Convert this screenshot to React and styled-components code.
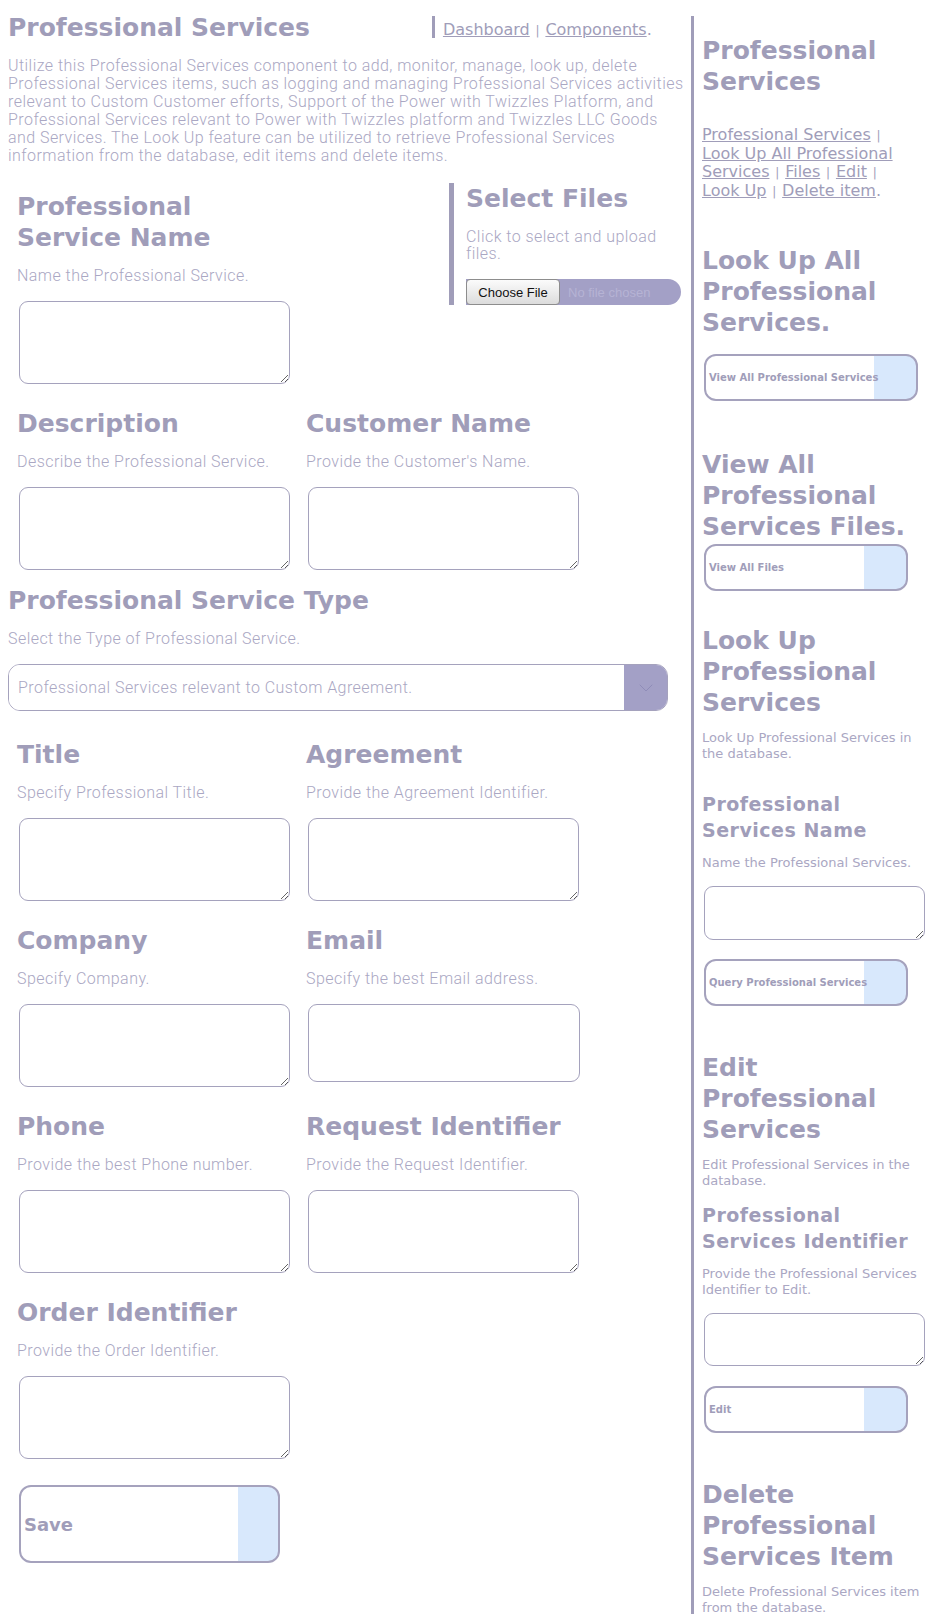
import React from 'react';
import styled, { createGlobalStyle } from 'styled-components';
import { ChevronDown } from 'lucide-react';

const THEME = {
    heading: '#a09db9',
    text: '#aaa7c3',
    line: '#a5a2bd',
    purple: '#a3a0c6',
    blue: '#d8e8fc',
};

const GlobalStyle = createGlobalStyle`
    * { box-sizing: border-box; }
    body {
        margin: 8px;
        background: #fff;
        color: ${THEME.text};
        font-family: "Roboto", "Liberation Sans", sans-serif;
    }
`;

const Page = styled.div`
    display: flex;
    align-items: stretch;
`;

const Main = styled.main`
    width: 680px;
    flex-shrink: 0;
`;

const Header = styled.header`
    display: flex;
    align-items: flex-start;
    margin-top: 4px;
`;

const Title = styled.h1`
    margin: 0;
    font: bold 25px/31px "DejaVu Sans", Verdana, sans-serif;
    color: ${THEME.heading};
`;

const Nav = styled.nav`
    display: flex;
    align-items: flex-start;
    margin: 4px 0 0 122px;
`;

const NavBar = styled.span`
    width: 3px;
    height: 22px;
    background: ${THEME.heading};
`;

const NavLinks = styled.div`
    margin: 3px 0 0 8px;
    font: 16px/22px "DejaVu Sans", Verdana, sans-serif;
    color: ${THEME.heading};
`;

const Link = styled.a`
    color: ${THEME.heading};
    text-decoration: underline;
    cursor: pointer;
`;

const Sep = styled.span`
    font-size: 12px;
    margin: 0 2px;
`;

// light body copy used across the form
const Copy = styled.p`
    margin: 14px 0 0;
    font-size: 16px;
    font-weight: 300;
    letter-spacing: 0.45px;
    line-height: ${(p) => p.$lh || 18}px;
`;

const Row = styled.div`
    display: flex;
    align-items: flex-start;
    margin-top: ${(p) => p.$top}px;
`;

const Field = styled.div`
    width: 289px;
    padding: ${(p) => p.$pad || 0}px 0 0 9px;
`;

const FieldTitle = styled.h2`
    margin: 0;
    font: bold 25px/31px "DejaVu Sans", Verdana, sans-serif;
    color: ${THEME.heading};
`;

const TextBox = styled.textarea`
    display: block;
    width: 271px;
    height: ${(p) => p.$h || 83}px;
    margin: 16px 0 0 2px;
    border: 1px solid ${THEME.line};
    border-radius: 9px;
    background: #fff;
    outline: none;
`;

const LineBox = styled.input`
    display: block;
    width: 272px;
    height: 78px;
    margin: 16px 0 0 2px;
    border: 1px solid ${THEME.line};
    border-radius: 9px;
    background: #fff;
    outline: none;
`;

const FileBox = styled.div`
    width: 235px;
    margin: 0 4px 0 auto;
    border-left: 5px solid ${THEME.heading};
    padding-left: 12px;
`;

const FileInput = styled.input`
    display: block;
    width: 215px;
    height: 26px;
    margin-top: 17px;
    background: ${THEME.purple};
    border-radius: 0 13px 13px 0;
    color: #b6b3d4;
    font: 13px "Liberation Sans", Arial, sans-serif;

    &::file-selector-button {
        height: 26px;
        width: 94px;
        margin-right: 8px;
        border: 1px solid #8d8d8d;
        border-radius: 4px;
        background: linear-gradient(#fbfbfb, #dcdcdc);
        color: #111;
        font: 13px "Liberation Sans", Arial, sans-serif;
    }
`;

const TypeSection = styled.section`
    margin-top: 15px;
`;

const SelectBox = styled.div`
    display: flex;
    width: 660px;
    height: 47px;
    margin-top: 16px;
    border: 1px solid ${THEME.line};
    border-radius: 12px;
    overflow: hidden;
`;

const SelectField = styled.select`
    flex: 1;
    appearance: none;
    border: 0;
    outline: none;
    background: #fff;
    padding-left: 9px;
    font-family: "Roboto", "Liberation Sans", sans-serif;
    font-size: 16px;
    font-weight: 300;
    letter-spacing: 0.45px;
    color: ${THEME.text};
`;

const SelectArrow = styled.span`
    width: 43px;
    display: flex;
    align-items: center;
    justify-content: center;
    background: ${THEME.purple};
    color: #8f8cb8;
`;

const SaveButton = styled.button`
    display: block;
    width: 261px;
    height: 78px;
    margin: 26px 0 0 11px;
    padding: 0 0 0 3px;
    border: 2px solid ${THEME.line};
    border-radius: 12px;
    background: linear-gradient(to right, #fff calc(100% - 40px), ${THEME.blue} 0);
    text-align: left;
    font: bold 18px "DejaVu Sans", Verdana, sans-serif;
    color: ${THEME.heading};
`;

const Sidebar = styled.aside`
    width: 233px;
    margin: 8px 0 0 3px;
    border-left: 3px solid ${THEME.heading};
    padding: 19px 0 0 8px;
    font-family: "DejaVu Sans", Verdana, sans-serif;
`;

const SideTitle = styled.h2`
    margin: ${(p) => p.$top || 0}px 0 0;
    font: bold 25px/31px "DejaVu Sans", Verdana, sans-serif;
    color: ${THEME.heading};
`;

const SideLinks = styled.div`
    width: 212px;
    margin-top: 29px;
    font-size: 16px;
    line-height: 18px;
    color: ${THEME.heading};
`;

const SideSub = styled.h3`
    margin: ${(p) => p.$top || 0}px 0 0;
    font: bold 19px/26px "DejaVu Sans", Verdana, sans-serif;
    letter-spacing: 0.5px;
    color: ${THEME.heading};
`;

const SideNote = styled.p`
    margin: ${(p) => p.$top || 12}px 0 0;
    font-size: 13px;
    line-height: 16px;
    color: ${THEME.text};
`;

const SideBox = styled(TextBox)`
    width: 221px;
    margin-top: 15px;
`;

const SideButton = styled.button`
    display: block;
    width: ${(p) => p.$w || 204}px;
    height: 47px;
    margin: ${(p) => p.$top}px 0 0 2px;
    padding: 0 0 0 3px;
    border: 2px solid ${THEME.line};
    border-radius: 12px;
    background: linear-gradient(to right, #fff calc(100% - 42px), ${THEME.blue} 0);
    text-align: left;
    font: bold 10px "DejaVu Sans", Verdana, sans-serif;
    color: ${THEME.heading};
    white-space: nowrap;
`;

const upperRow = [
    { title: 'Description', note: 'Describe the Professional Service.' },
    { title: 'Customer Name', note: "Provide the Customer's Name." },
];

const lowerRows = [
    [
        { title: 'Title', note: 'Specify Professional Title.' },
        { title: 'Agreement', note: 'Provide the Agreement Identifier.' },
    ],
    [
        { title: 'Company', note: 'Specify Company.' },
        { title: 'Email', note: 'Specify the best Email address.', line: true },
    ],
    [
        { title: 'Phone', note: 'Provide the best Phone number.' },
        { title: 'Request Identifier', note: 'Provide the Request Identifier.' },
    ],
    [{ title: 'Order Identifier', note: 'Provide the Order Identifier.' }],
];

function FormField({ item }) {
    return (
        <Field>
            <FieldTitle>{item.title}</FieldTitle>
            <Copy>{item.note}</Copy>
            {item.line ? <LineBox type="email" /> : <TextBox />}
        </Field>
    );
}

export default function App() {
    return (
        <Page>
            <GlobalStyle />
            <Main>
                <Header>
                    <Title>Professional Services</Title>
                    <Nav>
                        <NavBar />
                        <NavLinks>
                            <Link>Dashboard</Link>
                            <Sep> | </Sep>
                            <Link>Components</Link>.
                        </NavLinks>
                    </Nav>
                </Header>
                <Copy>
                    Utilize this Professional Services component to add, monitor, manage, look up, delete
                    Professional Services items, such as logging and managing Professional Services activities
                    relevant to Custom Customer efforts, Support of the Power with Twizzles Platform, and
                    Professional Services relevant to Power with Twizzles platform and Twizzles LLC Goods
                    and Services. The Look Up feature can be utilized to retrieve Professional Services
                    information from the database, edit items and delete items.
                </Copy>

                <Row $top={18}>
                    <Field $pad={8}>
                        <FieldTitle>Professional Service Name</FieldTitle>
                        <Copy>Name the Professional Service.</Copy>
                        <TextBox />
                    </Field>
                    <FileBox>
                        <FieldTitle>Select Files</FieldTitle>
                        <Copy $lh={17}>Click to select and upload files.</Copy>
                        <FileInput type="file" />
                    </FileBox>
                </Row>

                <Row $top={24}>
                    {upperRow.map((item) => (
                        <FormField key={item.title} item={item} />
                    ))}
                </Row>

                <TypeSection>
                    <FieldTitle>Professional Service Type</FieldTitle>
                    <Copy>Select the Type of Professional Service.</Copy>
                    <SelectBox>
                        <SelectField defaultValue="custom">
                            <option value="custom">Professional Services relevant to Custom Agreement.</option>
                            <option value="platform">Professional Services relevant to Power with Twizzles platform.</option>
                            <option value="goods">Professional Services relevant to Twizzles LLC Goods and Services.</option>
                        </SelectField>
                        <SelectArrow>
                            <ChevronDown size={24} strokeWidth={1} />
                        </SelectArrow>
                    </SelectBox>
                </TypeSection>

                {lowerRows.map((row, i) => (
                    <Row key={i} $top={i === 0 ? 28 : 24}>
                        {row.map((item) => (
                            <FormField key={item.title} item={item} />
                        ))}
                    </Row>
                ))}

                <SaveButton>Save</SaveButton>
            </Main>

            <Sidebar>
                <SideTitle>Professional Services</SideTitle>
                <SideLinks>
                    <Link>Professional Services</Link>
                    <Sep> | </Sep>
                    <Link>Look Up All Professional Services</Link>
                    <Sep> | </Sep>
                    <Link>Files</Link>
                    <Sep> | </Sep>
                    <Link>Edit</Link>
                    <Sep> | </Sep>
                    <Link>Look Up</Link>
                    <Sep> | </Sep>
                    <Link>Delete item</Link>.
                </SideLinks>

                <SideTitle $top={44}>Look Up All Professional Services.</SideTitle>
                <SideButton $top={16} $w={214}>View All Professional Services</SideButton>

                <SideTitle $top={48}>View All Professional Services Files.</SideTitle>
                <SideButton $top={2}>View All Files</SideButton>

                <SideTitle $top={34}>Look Up Professional Services</SideTitle>
                <SideNote>Look Up Professional Services in the database.</SideNote>
                <SideSub $top={29}>Professional Services Name</SideSub>
                <SideNote>Name the Professional Services.</SideNote>
                <SideBox $h={54} />
                <SideButton $top={19}>Query Professional Services</SideButton>

                <SideTitle $top={46}>Edit Professional Services</SideTitle>
                <SideNote>Edit Professional Services in the database.</SideNote>
                <SideSub $top={13}>Professional Services Identifier</SideSub>
                <SideNote>Provide the Professional Services Identifier to Edit.</SideNote>
                <SideBox $h={53} />
                <SideButton $top={20}>Edit</SideButton>

                <SideTitle $top={46}>Delete Professional Services Item</SideTitle>
                <SideNote>Delete Professional Services item from the database.</SideNote>
                <SideSub $top={13}>Professional Services Identifier</SideSub>
                <SideNote>Provide the Professional Services Identifier to Delete.</SideNote>
                <SideBox $h={53} />
                <SideButton $top={20}>Delete</SideButton>
            </Sidebar>
        </Page>
    );
}
